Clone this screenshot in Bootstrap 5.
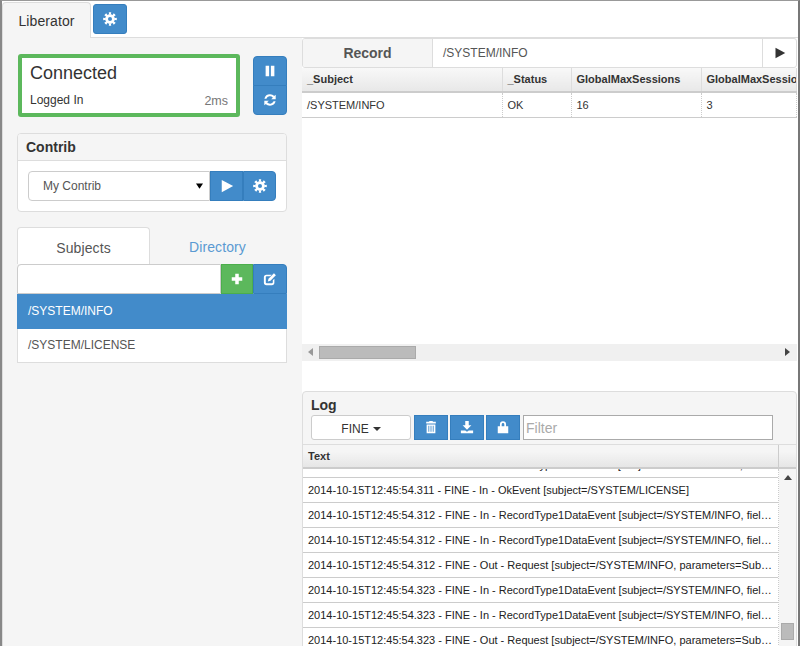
<!DOCTYPE html>
<html lang="en">

<head>
    <meta charset="UTF-8">
    <meta name="viewport" content="width=device-width, initial-scale=1.0">
    <title>Liberator</title>
    <link href="https://cdn.jsdelivr.net/npm/bootstrap@5.3.3/dist/css/bootstrap.min.css" rel="stylesheet">
    <style>
        html, body { height: 646px; overflow: hidden; }
        body { font-family: "Liberation Sans", Arial, sans-serif; font-size: 12px; color: #333; background: #fff; }
        .app-frame { height: 646px; border-top: 1px solid #999; border-left: 2px solid #888; border-right: 2px solid #777; overflow: hidden; }
        .ico { width: 14px; height: 14px; fill: #fff; display: block; }

        .btn-blue { --bs-btn-bg: #428bca; --bs-btn-border-color: #357ebd; --bs-btn-hover-bg: #3071a9; --bs-btn-hover-border-color: #285e8e; --bs-btn-padding-x: 0; --bs-btn-padding-y: 0; display: flex; align-items: center; justify-content: center; }
        .top-tabs { height: 37px; border-bottom: 1px solid #ddd; }
        .top-tab { width: 89px; height: 37px; background: #f5f5f5; border: 1px solid #ddd; border-bottom: 0; border-radius: 4px 4px 0 0; font-size: 14px; letter-spacing: .1px; margin-top: 1px; display: flex; align-items: center; justify-content: center; color: #333; }
        .gear-top { width: 34px; height: 30px; margin: 3px 0 0 2px; border-radius: 3px; }

        .main-area { height: 608px; }
        .side-pane { width: 300px; background: #f5f5f5; padding: 16px 15px 0 14px; flex: none; border-left: 1px solid #ddd; }
        .status-row { height: 63px; }
        .status-box { width: 222px; height: 63px; margin-left: 1px; border: 4px solid #5cb85c; border-radius: 3px; background: #fff; padding: 5px 8px 0 8px; flex: none; }
        .status-title { font-size: 18px; line-height: 20px; color: #333; }
        .status-foot { margin-top: 10px; font-size: 12px; line-height: 14px; }
        .status-ms { color: #777; font-size: 12.5px; margin: 1px 0 0 0; }
        .status-btns { width: 34px; height: 59px; margin: 2px 0 0 13px; flex: none; }
        .status-btns .btn { height: 30px; flex: none; border-radius: 4px; }

        .contrib-card { margin-top: 16px; height: 79px; --bs-card-border-color: #ddd; --bs-card-border-radius: 4px; --bs-card-inner-border-radius: 3px; }
        .contrib-card .card-header { height: 27px; padding: 4px 8px 0; background: #f5f5f5; font-size: 14px; line-height: 18px; font-weight: 700; border-color: #ddd; }
        .contrib-card .card-body { padding: 10px; }
        .contrib-pick { width: 182px; height: 30px; flex: none; font-size: 12px; padding: 0 0 0 14px; color: #555; border-color: #ccc; border-radius: 4px 0 0 4px; background-image: url("data:image/svg+xml,%3csvg xmlns='http://www.w3.org/2000/svg' viewBox='0 0 8 6'%3e%3cpath d='M0 0h8L4 6z'/%3e%3c/svg%3e"); background-size: 7px 6px; background-position: right 6px center; }
        .contrib-btn { width: 33px; height: 30px; flex: none; border-radius: 0; }
        .contrib-btn:last-child { border-radius: 0 4px 4px 0; }

        .subject-tabs { margin-top: 15px; height: 37px; }
        .subject-tab { width: 133px; height: 37px; font-size: 14px; letter-spacing: .1px; padding-top: 4px; display: flex; align-items: center; justify-content: center; }
        .subject-tab.on { background: #fff; border: 1px solid #ddd; border-bottom: 0; border-radius: 4px 4px 0 0; color: #555; }
        .subject-tab.off { color: #5a9ad2; padding-left: 2px; }
        .subject-search { height: 30px; }
        .subject-search .form-control { height: 30px; width: 204px; flex: none; border-radius: 4px 0 0 0; border-color: #ccc; }
        .btn-green { --bs-btn-bg: #5cb85c; --bs-btn-border-color: #4cae4c; --bs-btn-padding-x: 0; --bs-btn-padding-y: 0; width: 32px; height: 30px; border-radius: 0; display: flex; align-items: center; justify-content: center; }
        .search-edit { width: 34px; height: 30px; border-radius: 0 4px 0 0; }
        .subject-list { --bs-list-group-border-radius: 0; --bs-list-group-active-bg: #428bca; --bs-list-group-active-border-color: #428bca; --bs-list-group-border-color: #ddd; --bs-list-group-color: #555; font-size: 12px; }
        .subject-list .list-group-item { height: 34px; padding: 8px 10px 0; line-height: 16px; }
        .subject-list .list-group-item.active { height: 35px; padding-top: 8px; font-weight: 400; }

        .record-pane { width: 495px; flex: none; }
        .record-bar { height: 30px; border: 1px solid #ddd; border-radius: 3px; overflow: hidden; }
        .record-label { width: 130px; background: #f5f5f5; border-right: 1px solid #ddd; font-size: 14px; font-weight: 700; color: #555; display: flex; align-items: center; justify-content: center; }
        .record-input { flex: 1; padding: 0 10px; line-height: 28px; color: #555; }
        .record-go { width: 34px; border-left: 1px solid #ddd; display: flex; align-items: center; justify-content: center; }
        .record-go svg { fill: #333; width: 12px; height: 12px; }

        .data-grid { table-layout: fixed; width: 495px; margin: 0; font-size: 11px; --bs-table-color: #333; }
        .data-grid th { height: 24px; padding: 0 5px; font-weight: 700; background: linear-gradient(#f8f8f8, #e8e8e8); border-right: 1px solid #ddd; border-bottom: 2px solid #ccc; white-space: nowrap; overflow: hidden; vertical-align: middle; }
        .data-grid td { height: 25px; padding: 0 5px; border-right: 1px dotted #ccc; border-bottom: 1px solid #ccc; vertical-align: middle; }
        .grid-blank { height: 226px; }
        .h-scroll { height: 17px; background: #f0f0f0; padding: 0 7px 0 6px; }
        .h-thumb { width: 97px; height: 13px; margin-left: 6px; background: #bbb; border: 1px solid #aaa; }
        .tri-left { width: 0; height: 0; border: 4px solid transparent; border-left: 0; border-right: 5px solid #999; }
        .tri-right { width: 0; height: 0; border: 4px solid transparent; border-right: 0; border-left: 5px solid #444; margin-left: auto; }

        .log-panel { margin-top: 30px; height: 300px; border: 1px solid #ddd; border-radius: 4px 4px 0 0; background: #f5f5f5; overflow: hidden; }
        .log-title { font-size: 14px; line-height: 16px; font-weight: 700; padding: 5px 0 0 8px; height: 23px; }
        .log-tools { height: 25px; padding-left: 8px; gap: 2px; }
        .log-level { width: 100px; height: 25px; background: #fff; border: 1px solid #ccc; border-radius: 3px; padding-top: 3px; display: flex; align-items: center; justify-content: center; font-size: 12px; color: #333; margin-right: 1px; }
        .log-level .caret { width: 0; height: 0; margin-left: 4px; border: 4px solid transparent; border-top-color: #333; border-bottom: 0; }
        .log-btn { width: 34px; height: 25px; border-radius: 0; }
        .log-filter { width: 250px; height: 25px; margin-left: 1px; border: 1px solid #aaa; background: #fff; color: #aaa; font-size: 14px; line-height: 25px; padding: 0 2px; }
        .log-grid { margin-top: 4px; }
        .log-head { height: 25px; background: linear-gradient(#f5f5f5 30%, #e6e6e6); border-top: 1px solid #ddd; border-bottom: 2px solid #ccc; font-size: 11px; font-weight: 700; }
        .log-head-text { width: 476px; padding: 3px 5px 0; border-right: 1px solid #ccc; line-height: 16px; }
        .log-body { height: 178px; background: #fff; overflow: hidden; }
        .log-rows { width: 476px; flex: none; overflow: hidden; border-right: 1px dotted #ccc; }
        .log-row { height: 25px; line-height: 24px; padding: 0 3px 0 5px; font-size: 11px; color: #222; border-bottom: 1px solid #ccc; white-space: nowrap; overflow: hidden; text-overflow: ellipsis; }
        .log-row:first-child { margin-top: -16px; height: 25px; }
        .v-scroll { flex: 1; background: #f5f5f5; padding-top: 6px; }
        .tri-up { width: 0; height: 0; margin: 0 auto; border: 4px solid transparent; border-top: 0; border-bottom: 5px solid #444; }
        .v-thumb { width: 13px; height: 17px; background: #bbb; border: 1px solid #aaa; margin: 143px auto 0; }
    </style>
</head>

<body>

    <!-- shared glyphs -->
    <svg width="0" height="0" class="d-block" style="height:0">
        <symbol id="i-cog" viewBox="0 0 16 16">
            <circle cx="8" cy="8" r="3.9" fill="none" stroke="#fff" stroke-width="3.2"/>
            <circle cx="8" cy="8" r="6.3" fill="none" stroke="#fff" stroke-width="3" pathLength="16" stroke-dasharray="1 1" stroke-dashoffset="0.5"/>
        </symbol>
        <symbol id="i-pause" viewBox="0 0 16 16"><path d="M3 2h4v12H3zM9 2h4v12H9z"/></symbol>
        <symbol id="i-refresh" viewBox="0 0 16 16">
            <path d="M8 1.5c2 0 3.6.8 4.7 2L14.5 2v5.2H9.3l2-1.9A4.4 4.4 0 0 0 3.9 6.5H1.6A6.6 6.6 0 0 1 8 1.5z"/>
            <path d="M8 14.5c-2 0-3.6-.8-4.7-2L1.5 14V8.8h5.2l-2 1.9a4.4 4.4 0 0 0 7.4-1.2h2.3A6.6 6.6 0 0 1 8 14.5z"/>
        </symbol>
        <symbol id="i-play" viewBox="0 0 16 16"><path d="M2 1l13 7-13 7z"/></symbol>
        <symbol id="i-plus" viewBox="0 0 16 16"><path d="M6 2h4v4h4v4h-4v4H6v-4H2V6h4z"/></symbol>
        <symbol id="i-edit" viewBox="0 0 16 16">
            <path d="M4 3h6L8.200 4.800H4.200a1 1 0 0 0-1 1v6a1 1 0 0 0 1 1h6a1 1 0 0 0 1-1V9.500L13 7.700V12a3 3 0 0 1-3 3H4a3 3 0 0 1-3-3V6a3 3 0 0 1 3-3z"/>
            <path d="M12.500 1.500l2.200 2.200-6.200 6.300-3 .8.800-3z"/>
        </symbol>
        <symbol id="i-trash" viewBox="0 0 16 16">
            <path d="M6 1h4v1h3.500v2h-11V2H6zM3 5h10v10H3zM5 6.500v7h1v-7zm2.500 0v7h1v-7zm2.500 0v7h1v-7z" fill-rule="evenodd"/>
        </symbol>
        <symbol id="i-down" viewBox="0 0 16 16"><path d="M6 1h4v5h3l-5 5-5-5h3zM1 12h5l2 1.500 2-1.500h5v3H1z"/></symbol>
        <symbol id="i-lock" viewBox="0 0 16 16">
            <path d="M4.500 7V5a3.500 3.500 0 0 1 7 0v2H14v8H2V7zm2 0h3V5a1.500 1.500 0 0 0-3 0z" fill-rule="evenodd"/>
        </symbol>
    </svg>

    <div class="app-frame">
        <!-- Top tabs -->
        <div class="top-tabs d-flex">
            <div class="top-tab">Liberator</div>
            <button class="btn btn-primary btn-blue gear-top" type="button"><svg class="ico"><use href="#i-cog"/></svg></button>
        </div>

        <div class="main-area d-flex">
            <!-- Left side -->
            <div class="side-pane">
                <div class="status-row d-flex">
                    <div class="status-box">
                        <div class="status-title">Connected</div>
                        <div class="status-foot d-flex justify-content-between">
                            <span>Logged In</span>
                            <span class="status-ms">2ms</span>
                        </div>
                    </div>
                    <div class="status-btns btn-group-vertical">
                        <button class="btn btn-primary btn-blue" type="button"><svg class="ico"><use href="#i-pause"/></svg></button>
                        <button class="btn btn-primary btn-blue" type="button"><svg class="ico"><use href="#i-refresh"/></svg></button>
                    </div>
                </div>

                <div class="card contrib-card">
                    <div class="card-header">Contrib</div>
                    <div class="card-body d-flex">
                        <select class="form-select contrib-pick">
                            <option>My Contrib</option>
                        </select>
                        <button class="btn btn-primary btn-blue contrib-btn" type="button"><svg class="ico"><use href="#i-play"/></svg></button>
                        <button class="btn btn-primary btn-blue contrib-btn" type="button"><svg class="ico"><use href="#i-cog"/></svg></button>
                    </div>
                </div>

                <div class="subject-tabs d-flex">
                    <div class="subject-tab on">Subjects</div>
                    <div class="subject-tab off">Directory</div>
                </div>
                <div class="subject-search d-flex">
                    <input type="text" class="form-control">
                    <button class="btn btn-success btn-green" type="button"><svg class="ico"><use href="#i-plus"/></svg></button>
                    <button class="btn btn-primary btn-blue search-edit" type="button"><svg class="ico"><use href="#i-edit"/></svg></button>
                </div>
                <div class="list-group subject-list">
                    <a href="#" class="list-group-item active">/SYSTEM/INFO</a>
                    <a href="#" class="list-group-item">/SYSTEM/LICENSE</a>
                </div>
            </div>

            <!-- Right side -->
            <div class="record-pane">
                <div class="record-bar d-flex">
                    <div class="record-label">Record</div>
                    <div class="record-input">/SYSTEM/INFO</div>
                    <div class="record-go"><svg class="ico"><use href="#i-play"/></svg></div>
                </div>

                <table class="table data-grid">
                    <colgroup>
                        <col style="width:200px"><col style="width:69px"><col style="width:130px"><col>
                    </colgroup>
                    <thead>
                        <tr><th>_Subject</th><th>_Status</th><th>GlobalMaxSessions</th><th>GlobalMaxSessions</th></tr>
                    </thead>
                    <tbody>
                        <tr><td>/SYSTEM/INFO</td><td>OK</td><td>16</td><td>3</td></tr>
                    </tbody>
                </table>
                <div class="grid-blank"></div>
                <div class="h-scroll d-flex align-items-center">
                    <div class="tri-left"></div>
                    <div class="h-thumb"></div>
                    <div class="tri-right"></div>
                </div>

                <div class="log-panel">
                    <div class="log-title">Log</div>
                    <div class="log-tools d-flex">
                        <div class="log-level">FINE<span class="caret"></span></div>
                        <button class="btn btn-primary btn-blue log-btn" type="button"><svg class="ico"><use href="#i-trash"/></svg></button>
                        <button class="btn btn-primary btn-blue log-btn" type="button"><svg class="ico"><use href="#i-down"/></svg></button>
                        <button class="btn btn-primary btn-blue log-btn" type="button"><svg class="ico"><use href="#i-lock"/></svg></button>
                        <div class="log-filter">Filter</div>
                    </div>
                    <div class="log-grid">
                        <div class="log-head d-flex"><div class="log-head-text">Text</div></div>
                        <div class="log-body d-flex">
                            <div class="log-rows" id="logRows"></div>
                            <div class="v-scroll">
                                <div class="tri-up"></div>
                                <div class="v-thumb"></div>
                            </div>
                        </div>
                    </div>
                </div>
            </div>
        </div>
    </div>

    <script src="https://cdn.jsdelivr.net/npm/bootstrap@5.3.3/dist/js/bootstrap.bundle.min.js"></script>

    <script>
        // log lines, newest last
        const logLines = [
            "2014-10-15T12:45:54.311 - FINE - In - RecordType1DataEvent [subject=/SYSTEM/INFO, fields=[GlobalMaxSessions=16]]",
            "2014-10-15T12:45:54.311 - FINE - In - OkEvent [subject=/SYSTEM/LICENSE]",
            "2014-10-15T12:45:54.312 - FINE - In - RecordType1DataEvent [subject=/SYSTEM/INFO, fields=[GlobalMaxSessions=16]]",
            "2014-10-15T12:45:54.312 - FINE - In - RecordType1DataEvent [subject=/SYSTEM/INFO, fields=[GlobalMaxSessions=16]]",
            "2014-10-15T12:45:54.312 - FINE - Out - Request [subject=/SYSTEM/INFO, parameters=SubscriptionParameters]",
            "2014-10-15T12:45:54.323 - FINE - In - RecordType1DataEvent [subject=/SYSTEM/INFO, fields=[GlobalMaxSessions=16]]",
            "2014-10-15T12:45:54.323 - FINE - In - RecordType1DataEvent [subject=/SYSTEM/INFO, fields=[GlobalMaxSessions=16]]",
            "2014-10-15T12:45:54.323 - FINE - Out - Request [subject=/SYSTEM/INFO, parameters=SubscriptionParameters]"
        ];

        const logRows = document.getElementById('logRows');
        logLines.forEach(line => {
            const row = document.createElement('div');
            row.classList.add('log-row');
            row.textContent = line;
            logRows.appendChild(row);
        });
    </script>

</body>

</html>
